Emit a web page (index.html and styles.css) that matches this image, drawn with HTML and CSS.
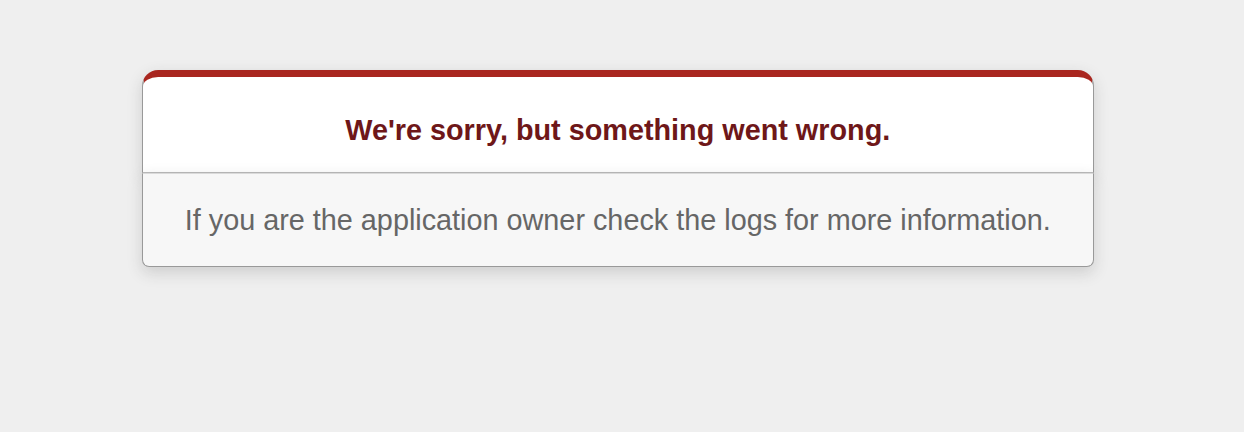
FILE: index.html
```html
<!DOCTYPE html>
<html>
<head>
<meta charset="utf-8">
<title>We're sorry, but something went wrong (500)</title>
<link rel="stylesheet" href="styles.css">
</head>
<body>
<div class="dialog">
  <div class="head">
    <h1 class="title">We're sorry, but something went wrong.</h1>
  </div>
  <p class="note">If you are the application owner check the logs for more information.</p>
</div>
</body>
</html>
```
FILE: styles.css
```css
html, body {
  margin: 0;
  padding: 0;
}
body {
  background-color: #EFEFEF;
  color: #2E2F30;
  text-align: center;
  font-family: "Liberation Sans", Arial, sans-serif;
  font-size: 28.8px;
}
.dialog {
  width: 951.5px;
  margin: 70px 0 0 142px;
}
.head {
  border: 1px solid #CCC;
  border-right-color: #999;
  border-left-color: #999;
  border-bottom-color: #BBB;
  border-top: #A9261F solid 7.2px;
  border-top-left-radius: 16.2px;
  border-top-right-radius: 16.2px;
  background-color: #fff;
  padding: 12.6px 12% 0;
  box-shadow: 0 5.4px 14.4px rgba(50, 50, 50, 0.17);
}
.title {
  font-size: 28.8px;
  color: #6E1719;
  line-height: 1.5em;
  margin: 0;
  padding: 19.5px 0 19.8px;
}
.note {
  margin: 0 0 1em;
  padding: 29.5px 1em 29.5px;
  line-height: 33px;
  background-color: #F7F7F7;
  border: 1px solid #CCC;
  border-right-color: #999;
  border-left-color: #999;
  border-bottom-color: #999;
  border-bottom-left-radius: 7.2px;
  border-bottom-right-radius: 7.2px;
  border-top-color: #DADADA;
  color: #666;
  box-shadow: 0 5.4px 14.4px rgba(50, 50, 50, 0.17);
}
```
